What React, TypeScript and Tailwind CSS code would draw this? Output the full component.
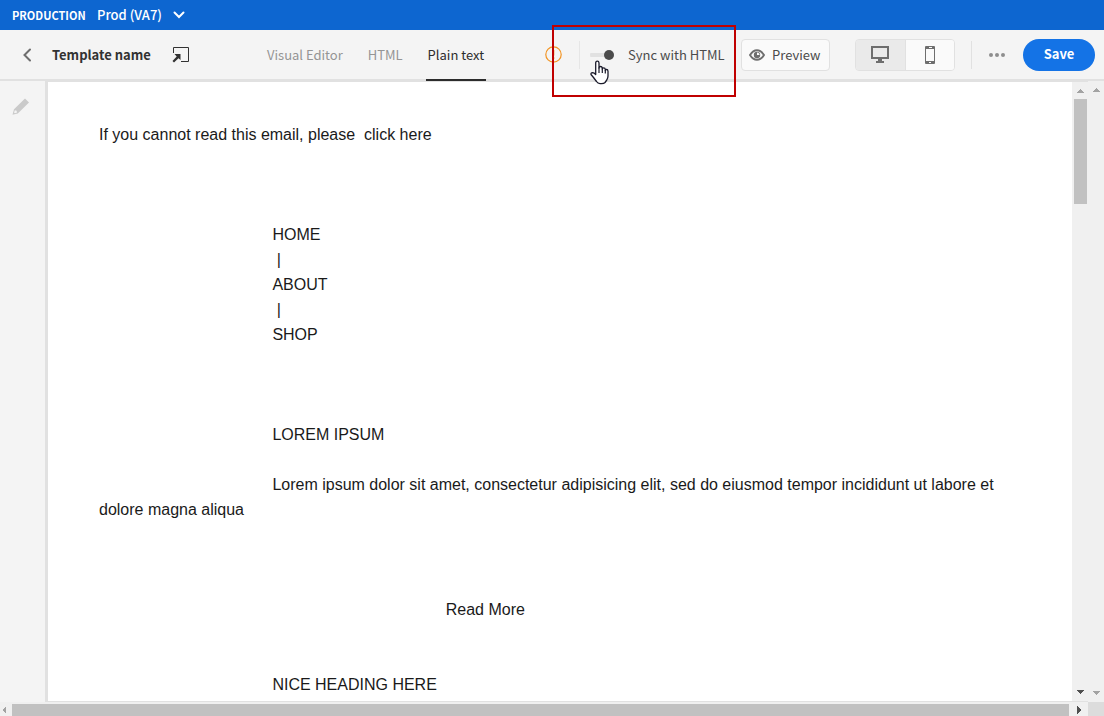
import { useState } from "react";

const indent = " ".repeat(39);

const message = [
  "If you cannot read this email, please  click here",
  "",
  "",
  "",
  indent + "HOME",
  indent + " |",
  indent + "ABOUT",
  indent + " |",
  indent + "SHOP",
  "",
  "",
  "",
  indent + "LOREM IPSUM",
  "",
  indent +
    "Lorem ipsum dolor sit amet, consectetur adipisicing elit, sed do eiusmod tempor incididunt ut labore et dolore magna aliqua",
  "",
  "",
  "",
  indent + indent + "Read More",
  "",
  "",
  indent + "NICE HEADING HERE",
].join("\n");

const tabs = ["Visual Editor", "HTML", "Plain text"];

function Arrow({ points, className }: { points: string; className: string }) {
  return (
    <svg width="8" height="8" viewBox="0 0 8 8" className={className} aria-hidden="true" shapeRendering="crispEdges">
      <polygon points={points} fill="currentColor" />
    </svg>
  );
}

const UP = "4,2 8,6 0,6";
const DOWN = "0,2 8,2 4,6";
const LEFT = "2,4 6,0 6,8";
const RIGHT = "2,0 6,4 2,8";

function EnvironmentBar() {
  return (
    <header className="flex h-[30px] shrink-0 items-center bg-[#0d66d0] pl-3 text-white">
      <span className="w-[85px] text-[11px] leading-[26px] font-bold whitespace-nowrap">PRODUCTION</span>
      <button type="button" className="flex items-center text-[13px] leading-[26px] font-medium whitespace-nowrap">
        <span className="w-[76px] text-left">Prod (VA7)</span>
        <svg width="12" height="8" viewBox="0 0 12 8" fill="none" stroke="currentColor" strokeWidth="2" aria-hidden="true">
          <path d="M1.500 1.500 6 6 10.500 1.500" strokeLinecap="round" />
        </svg>
      </button>
    </header>
  );
}

function HandCursor() {
  return (
    <svg width="20" height="25" viewBox="0 0 20 25" aria-hidden="true">
      <path
        d="M5.700 14.500V3Q5.700 1.200 7.300 1.200T9 3V8Q9 6.500 10.500 6.500T12.300 8V9Q12.300 7.800 13.700 7.800T15.300 9.300V10.300Q15.300 9.500 16.600 9.500T18 11.300V16Q18 18 16.800 20L15 22.500Q14 23.600 11.500 23.600H10Q7.800 23.600 6.500 21.500L3.500 17.500 1 14.500Q.7 12.700 2.500 12.700 4.200 12.900 5.700 14.500Z"
        fill="white"
        stroke="#1b1b2b"
        strokeWidth="1.300"
        strokeLinejoin="round"
      />
      <path d="M9 7.500V13M12.300 8.500V13M15.300 10V13.500" stroke="#1b1b2b" strokeWidth="1.200" />
    </svg>
  );
}

function SyncSwitch() {
  const [synced, setSynced] = useState(true);
  return (
    <div className="relative flex w-[161px] items-center pl-[10px]">
      <label className="flex items-center text-[13px] leading-[32px] whitespace-nowrap text-[#4b4b4b]">
        <input
          type="checkbox"
          role="switch"
          checked={synced}
          onChange={(e) => setSynced(e.target.checked)}
          className="peer sr-only"
        />
        <span className="mr-[14px] flex h-[10px] w-6 items-center justify-start rounded-full bg-[linear-gradient(#e1e1e1,#e1e1e1)] bg-[length:100%_4px] bg-center bg-no-repeat peer-checked:justify-end">
          <span className="size-[10px] rounded-full bg-[#4b4b4b]" />
        </span>
        Sync with HTML
      </label>
      <div className="pointer-events-none absolute -top-[14px] left-[-28px] h-[72px] w-[184px] border-2 border-[#c00000]">
        <div className="absolute top-[33px] left-9">
          <HandCursor />
        </div>
      </div>
    </div>
  );
}

function Toolbar() {
  const [active, setActive] = useState("Plain text");
  return (
    <div className="flex h-[51px] shrink-0 border-b-2 border-[#e1e1e1] bg-[#f4f4f4]">
      <div className="flex items-center">
        <button type="button" aria-label="Back" className="flex w-[52px] justify-center pl-[2px] text-[#6e6e6e]">
          <svg width="10" height="14" viewBox="0 0 10 14" fill="none" stroke="currentColor" strokeWidth="2" aria-hidden="true">
            <path d="M8 1.500 2.500 7 8 12.500" strokeLinecap="round" />
          </svg>
        </button>
        <h1 className="w-[120px] text-[13px] leading-[32px] font-bold whitespace-nowrap text-[#323232]">Template name</h1>
        <button type="button" aria-label="Open in new window" className="w-[95px] text-[#323232]">
          <svg width="18" height="17" viewBox="0 0 18 17" fill="none" aria-hidden="true">
            <path d="M1.500 7V1.500H16.500V15.500H9" stroke="currentColor" strokeWidth="1" />
            <path d="M2.500 8H8.500V14L6.500 12.300 2 16.500 .5 15 4.700 10.500Z" fill="currentColor" />
          </svg>
        </button>
      </div>
      <nav className="-mb-[2px] -ml-[2px] flex gap-[21px]" aria-label="Editor mode">
        {tabs.map((tab) => (
          <button
            key={tab}
            type="button"
            aria-current={tab === active ? "page" : undefined}
            onClick={() => setActive(tab)}
            className={
              "border-b-2 px-[2px] text-[13px] whitespace-nowrap " +
              (tab === active ? "border-[#2c2c2c] text-[#2c2c2c]" : "border-transparent text-[#959595]")
            }
          >
            {tab}
          </button>
        ))}
      </nav>
      <div className="ml-auto flex items-center pr-[9px]">
        <svg width="17" height="17" viewBox="0 0 17 17" fill="none" stroke="#f29423" className="mr-[17px]" role="img" aria-label="Warning">
          <circle cx="8.500" cy="8.500" r="7.700" strokeWidth="1.200" />
          <path d="M8.500 4V9.500M8.500 11.200V13" strokeWidth="1.600" />
        </svg>
        <div className="h-7 border-l border-[#e6e6e6]" />
        <SyncSwitch />
        <button
          type="button"
          className="flex h-8 w-[89px] items-center gap-[7px] rounded border border-[#e1e1e1] bg-[#fafafa] pl-[7px] text-[13px] text-[#4b4b4b]"
        >
          <svg width="16" height="12" viewBox="0 0 16 12" fill="none" aria-hidden="true">
            <path d="M1 6Q4 1.200 8 1.200T15 6Q12 10.800 8 10.800T1 6Z" stroke="#6e6e6e" strokeWidth="1.900" />
            <circle cx="8" cy="6" r="3.200" fill="#6e6e6e" />
            <path d="M8 3.500V6H10.500A2.500 2.500 0 0 0 8 3.500Z" fill="#fafafa" />
          </svg>
          Preview
        </button>
        <div className="ml-[25px] flex h-8 w-[100px] overflow-hidden rounded border border-[#e1e1e1]">
          <button
            type="button"
            aria-label="Desktop view"
            className="flex flex-1 items-center justify-center border-r border-[#e1e1e1] bg-[#eaeaea]"
          >
            <svg width="18" height="17" viewBox="0 0 18 17" fill="#6e6e6e" aria-hidden="true">
              <path fillRule="evenodd" d="M0 0H18V13H11V15H13V17H5V15H7V13H0ZM2 2V11H16V2Z" />
            </svg>
          </button>
          <button type="button" aria-label="Mobile view" className="flex flex-1 items-center justify-center bg-[#fafafa]">
            <svg width="10" height="18" viewBox="0 0 10 18" aria-hidden="true">
              <rect width="10" height="18" rx="1" fill="#6e6e6e" />
              <path d="M1 3H9V15H1ZM4 1H7V2H4ZM4 16H6V17H4Z" fill="#fafafa" />
            </svg>
          </button>
        </div>
        <div className="ml-4 h-7 border-l border-[#e1e1e1]" />
        <button type="button" aria-label="More options" className="ml-4 w-[35px]">
          <svg width="18" height="4" viewBox="0 0 18 4" fill="#8e8e8e" aria-hidden="true">
            <circle cx="3" cy="2" r="2" />
            <circle cx="9" cy="2" r="2" />
            <circle cx="15" cy="2" r="2" />
          </svg>
        </button>
        <button type="button" className="h-8 w-[72px] rounded-full bg-[#1473e6] pb-[2px] text-[13px] font-bold text-white">
          Save
        </button>
      </div>
    </div>
  );
}

export default function App() {
  const [text, setText] = useState(message);
  return (
    <div className="flex h-screen flex-col overflow-hidden bg-[#f4f4f4] font-['Noto_Sans_CJK_JP',sans-serif]">
      <EnvironmentBar />
      <Toolbar />
      <main className="flex min-h-0 flex-1">
        <div className="flex min-w-0 flex-1 flex-col">
          <div className="flex min-h-0 flex-1">
            <aside className="w-[45px] shrink-0 pt-[17px] pl-3">
              <button type="button" aria-label="Edit" className="block">
                <svg width="18" height="17" viewBox="0 0 18 17" fill="#cacaca" aria-hidden="true">
                  <path fillRule="evenodd" d="M13 .5 17 4.500 5.800 15.500 .5 16.700 2 11.300ZM2.900 12.200 2 14.500 3 15.300 5 14.600 4.600 12.800Z" />
                </svg>
              </button>
            </aside>
            <div className="flex min-w-0 flex-1 border-t border-b border-l-3 border-[#e1e1e1]">
              <textarea
                aria-label="Plain text content"
                value={text}
                onChange={(e) => setText(e.target.value)}
                spellCheck={false}
                className="block min-w-0 flex-1 resize-none overflow-hidden bg-white px-[51px] pt-10 font-['Liberation_Sans',Arial,sans-serif] text-base leading-[25px] text-[#1a1a1a] outline-none"
              />
              <div className="flex w-4 flex-col items-center justify-between bg-[#f0f0f0] pt-[5px] pb-[5px]">
                <div className="flex flex-col items-center gap-1">
                  <Arrow points={UP} className="text-[#a3a3a3]" />
                  <div className="h-[105px] w-[13px] bg-[#c1c1c1]" />
                </div>
                <Arrow points={DOWN} className="text-[#505050]" />
              </div>
            </div>
          </div>
          <div className="flex h-[14px] shrink-0 items-center bg-[#f0f0f0] pt-[2px]">
            <Arrow points={LEFT} className="mr-1 text-[#a3a3a3]" />
            <div className="h-3 flex-1 bg-[#c1c1c1]" />
            <Arrow points={RIGHT} className="mr-[5px] ml-[6px] text-[#505050]" />
          </div>
        </div>
        <div className="flex w-4 shrink-0 flex-col bg-[#f0f0f0]">
          <div className="flex flex-1 flex-col items-center justify-between pt-[5px] pb-[5px] text-[#a3a3a3]">
            <Arrow points={UP} className="" />
            <Arrow points={DOWN} className="" />
          </div>
          <div className="h-[14px] bg-[#dcdcdc]" />
        </div>
      </main>
    </div>
  );
}
